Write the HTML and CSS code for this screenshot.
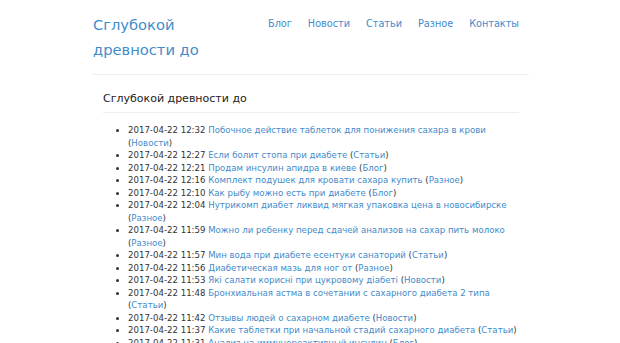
FILE: index.html
```html
<!DOCTYPE html>
<html lang="ru">
<head>
  <meta charset="UTF-8">
  <title>Сглубокой древности до</title>
  <link rel="stylesheet" href="styles.css">
</head>
<body>

  <div class="container">
    <header class="header">
      <a class="brand" href="#">Сглубокой древности до</a>
      <nav class="nav">
        <a href="#">Блог</a>
        <a href="#">Новости</a>
        <a href="#">Статьи</a>
        <a href="#">Разное</a>
        <a href="#">Контакты</a>
      </nav>
    </header>

    <div class="panel">
      <h2>Сглубокой древности до</h2>
      <ul class="posts">
        <li>2017-04-22 12:32 <a href="#">Побочное действие таблеток для понижения сахара в крови</a> (<a href="#">Новости</a>)</li>
        <li>2017-04-22 12:27 <a href="#">Если болит стопа при диабете</a> (<a href="#">Статьи</a>)</li>
        <li>2017-04-22 12:21 <a href="#">Продам инсулин апидра в киеве</a> (<a href="#">Блог</a>)</li>
        <li>2017-04-22 12:16 <a href="#">Комплект подушек для кровати сахара купить</a> (<a href="#">Разное</a>)</li>
        <li>2017-04-22 12:10 <a href="#">Как рыбу можно есть при диабете</a> (<a href="#">Блог</a>)</li>
        <li>2017-04-22 12:04 <a href="#">Нутрикомп диабет ликвид мягкая упаковка цена в новосибирске</a> (<a href="#">Разное</a>)</li>
        <li>2017-04-22 11:59 <a href="#">Можно ли ребенку перед сдачей анализов на сахар пить молоко</a> (<a href="#">Разное</a>)</li>
        <li>2017-04-22 11:57 <a href="#">Мин вода при диабете есентуки санаторий</a> (<a href="#">Статьи</a>)</li>
        <li>2017-04-22 11:56 <a href="#">Диабетическая мазь для ног от</a> (<a href="#">Разное</a>)</li>
        <li>2017-04-22 11:53 <a href="#">Які салати корисні при цукровому діабеті</a> (<a href="#">Новости</a>)</li>
        <li>2017-04-22 11:48 <a href="#">Бронхиальная астма в сочетании с сахарного диабета 2 типа</a> (<a href="#">Статьи</a>)</li>
        <li>2017-04-22 11:42 <a href="#">Отзывы людей о сахарном диабете</a> (<a href="#">Новости</a>)</li>
        <li>2017-04-22 11:37 <a href="#">Какие таблетки при начальной стадий сахарного диабета</a> (<a href="#">Статьи</a>)</li>
        <li>2017-04-22 11:31 <a href="#">Анализ на иммунореактивный инсулин</a> (<a href="#">Блог</a>)</li>
      </ul>
    </div>
  </div>

</body>
</html>
```

FILE: styles.css
```css
body {
  margin: 0;
  font-family: "DejaVu Sans", sans-serif;
  color: #333;
  background: #fff;
}
a {
  color: #428bca;
  text-decoration: none;
}
.container {
  width: 436px;
  margin: 0 auto;
  padding-left: 2px;
}
.header {
  display: flex;
  justify-content: space-between;
  align-items: flex-start;
  padding-top: 12px;
  padding-bottom: 12px;
  border-bottom: 1px solid #eee;
}
.brand {
  width: 120px;
  font-size: 14.7px;
  line-height: 25px;
}
.nav {
  display: flex;
  gap: 16px;
  padding-top: 4px;
  padding-right: 10px;
  font-size: 9.7px;
  line-height: 16px;
}
.panel {
  padding: 0 10px;
}
.panel h2 {
  margin: 17px 0 0;
  padding-bottom: 7px;
  font-size: 11px;
  font-weight: normal;
  color: #222;
  border-bottom: 1px solid #eee;
}
.posts {
  margin: 11px 0 0;
  padding-left: 25px;
  font-size: 8.6px;
  line-height: 12.5px;
}
```
